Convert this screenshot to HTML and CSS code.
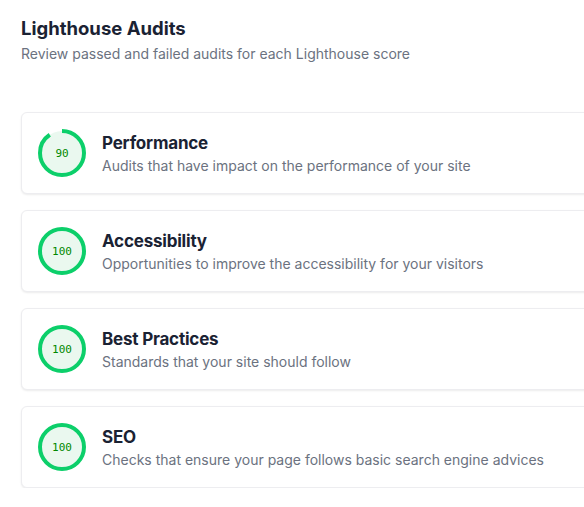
FILE: index.html
```html
<!DOCTYPE html>
<html lang="en">
<head>
<meta charset="utf-8">
<title>Lighthouse Audits</title>
<link rel="stylesheet" href="styles.css">
</head>
<body>
<main class="page">
  <header class="header">
    <h1 class="title">Lighthouse Audits</h1>
    <p class="subtitle">Review passed and failed audits for each Lighthouse score</p>
  </header>
  <section class="list">
    <article class="card">
      <div class="gauge">
        <svg class="gauge-svg" viewBox="0 0 48 48" width="48" height="48">
          <circle class="gauge-bg" cx="24" cy="24" r="22"></circle>
          <circle class="gauge-arc" cx="24" cy="24" r="22" style="stroke-dasharray: 124.4 138.2"></circle>
        </svg>
        <span class="gauge-value">90</span>
      </div>
      <div class="info">
        <h2 class="card-title">Performance</h2>
        <p class="card-desc">Audits that have impact on the performance of your site</p>
      </div>
    </article>
    <article class="card">
      <div class="gauge">
        <svg class="gauge-svg" viewBox="0 0 48 48" width="48" height="48">
          <circle class="gauge-bg" cx="24" cy="24" r="22"></circle>
          <circle class="gauge-arc" cx="24" cy="24" r="22" style="stroke-dasharray: 138.2 138.2"></circle>
        </svg>
        <span class="gauge-value">100</span>
      </div>
      <div class="info">
        <h2 class="card-title">Accessibility</h2>
        <p class="card-desc">Opportunities to improve the accessibility for your visitors</p>
      </div>
    </article>
    <article class="card">
      <div class="gauge">
        <svg class="gauge-svg" viewBox="0 0 48 48" width="48" height="48">
          <circle class="gauge-bg" cx="24" cy="24" r="22"></circle>
          <circle class="gauge-arc" cx="24" cy="24" r="22" style="stroke-dasharray: 138.2 138.2"></circle>
        </svg>
        <span class="gauge-value">100</span>
      </div>
      <div class="info">
        <h2 class="card-title">Best Practices</h2>
        <p class="card-desc">Standards that your site should follow</p>
      </div>
    </article>
    <article class="card">
      <div class="gauge">
        <svg class="gauge-svg" viewBox="0 0 48 48" width="48" height="48">
          <circle class="gauge-bg" cx="24" cy="24" r="22"></circle>
          <circle class="gauge-arc" cx="24" cy="24" r="22" style="stroke-dasharray: 138.2 138.2"></circle>
        </svg>
        <span class="gauge-value">100</span>
      </div>
      <div class="info">
        <h2 class="card-title">SEO</h2>
        <p class="card-desc">Checks that ensure your page follows basic search engine advices</p>
      </div>
    </article>
  </section>
</main>
</body>
</html>
```
FILE: styles.css
```css
html, body {
  margin: 0;
  padding: 0;
  background: #ffffff;
}
body {
  font-family: Inter, "Noto Sans", "Liberation Sans", sans-serif;
  color: #1a2233;
  overflow: hidden;
}
.page {
  padding: 16px 0 0 21px;
  width: 620px;
}
.header {
  margin-bottom: 48px;
}
.title {
  margin: 0;
  font-size: 18.5px;
  line-height: 24px;
  font-weight: 700;
  color: #1a2233;
}
.subtitle {
  margin: 4px 0 0;
  font-size: 14px;
  line-height: 20px;
  color: #6b7280;
}
.list {
  display: flex;
  flex-direction: column;
  gap: 16px;
}
.card {
  display: flex;
  align-items: center;
  gap: 16px;
  padding: 16px;
  border: 1px solid #ededf0;
  border-radius: 6px;
  background: #fff;
  box-shadow: 0 1px 2px rgba(0, 0, 0, 0.08);
}
.gauge {
  position: relative;
  width: 48px;
  height: 48px;
  flex: none;
}
.gauge-svg {
  display: block;
  transform: rotate(-90deg);
}
.gauge-bg {
  fill: #eaf8ef;
  stroke: none;
}
.gauge-arc {
  fill: none;
  stroke: #0ccf6a;
  stroke-width: 4;
}
.gauge-value {
  position: absolute;
  inset: 0;
  display: flex;
  align-items: center;
  justify-content: center;
  font-family: "DejaVu Sans Mono", "Liberation Mono", monospace;
  font-size: 11px;
  color: #008800;
}
.info {
  display: flex;
  flex-direction: column;
  padding-top: 2px;
}
.card-title {
  margin: 0;
  font-size: 17px;
  line-height: 22px;
  font-weight: 700;
  letter-spacing: -0.2px;
  color: #1a2233;
}
.card-desc {
  margin: 2px 0 0;
  font-size: 14px;
  line-height: 20px;
  color: #6b7280;
}
```
